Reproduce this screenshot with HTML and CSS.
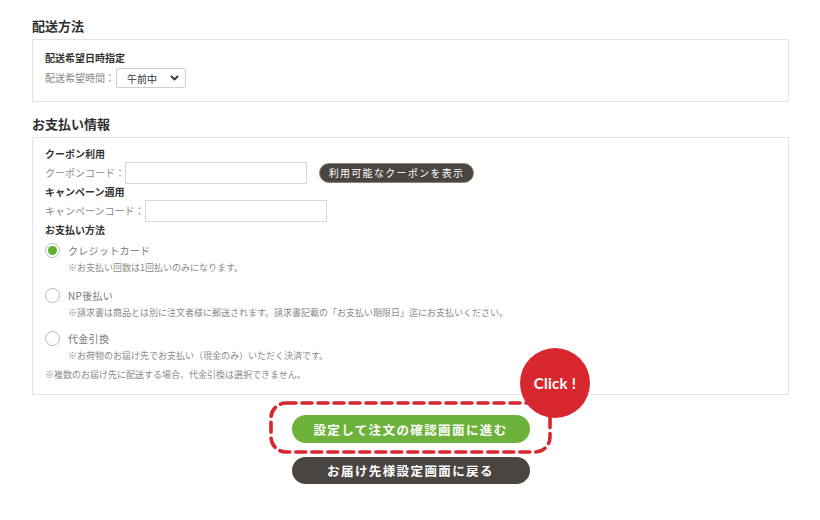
FILE: index.html
```html
<!DOCTYPE html>
<html lang="ja">
<head>
<meta charset="utf-8">
<link rel="stylesheet" href="styles.css">
</head>
<body>
<div class="page">
  <h2 class="sec-title">配送方法</h2>
  <div class="box box-ship">
    <div class="sub">配送希望日時指定</div>
    <div class="row">
      <span class="lbl">配送希望時間：</span>
      <div class="select"><span>午前中</span>
        <svg width="9" height="6" viewBox="0 0 9 6"><path d="M1 1l3.5 3.5L8 1" fill="none" stroke="#333" stroke-width="1.8"/></svg>
      </div>
    </div>
  </div>

  <h2 class="sec-title">お支払い情報</h2>
  <div class="box box-pay">
    <div class="sub">クーポン利用</div>
    <div class="row">
      <span class="lbl">クーポンコード：</span>
      <input class="txt" type="text">
      <button class="pill">利用可能なクーポンを表示</button>
    </div>
    <div class="sub">キャンペーン適用</div>
    <div class="row">
      <span class="lbl">キャンペーンコード：</span>
      <input class="txt" type="text">
    </div>
    <div class="sub">お支払い方法</div>

    <div class="opt opt-first">
      <div class="opt-row"><span class="radio on"></span><span class="opt-lbl">クレジットカード</span></div>
      <div class="note">※お支払い回数は1回払いのみになります。</div>
    </div>
    <div class="opt">
      <div class="opt-row"><span class="radio"></span><span class="opt-lbl">NP後払い</span></div>
      <div class="note">※請求書は商品とは別に注文者様に郵送されます。請求書記載の「お支払い期限日」迄にお支払いください。</div>
    </div>
    <div class="opt opt-last">
      <div class="opt-row"><span class="radio"></span><span class="opt-lbl">代金引換</span></div>
      <div class="note">※お荷物のお届け先でお支払い（現金のみ）いただく決済です。</div>
    </div>
    <div class="note note-final">※複数のお届け先に配送する場合、代金引換は選択できません。</div>
  </div>

  <div class="actions">
    <div class="focus">
      <svg class="dash" width="283" height="53" viewBox="0 0 283 53"><rect x="2" y="2" width="279" height="49" rx="15" fill="none" stroke="#d8262e" stroke-width="3.6" stroke-dasharray="10 6" stroke-linecap="round"/></svg>
      <button class="btn btn-green">設定して注文の確認画面に進む</button>
      <div class="click">Click !</div>
    </div>
    <button class="btn btn-dark">お届け先様設定画面に戻る</button>
  </div>
</div>
</body>
</html>
```

FILE: styles.css
```css
* { box-sizing: border-box; }
html, body { margin: 0; padding: 0; background: #fff; }
body {
  font-family: "Noto Sans CJK JP", "Noto Sans", sans-serif;
  color: #333;
}
.page {
  width: 820px;
  padding: 16px 31px 0 32px;
}
.sec-title {
  margin: 0 0 3px 0;
  font-size: 13px;
  line-height: 20px;
  font-weight: 700;
  color: #2e2e2e;
}
.box {
  border: 1px solid #e4e4e4;
  padding: 0 12px;
}
.box-ship {
  height: 63px;
  padding-top: 10px;
  margin-bottom: 12px;
}
.box-pay {
  padding-top: 8px;
  padding-bottom: 12px;
}
.sub {
  font-size: 10px;
  line-height: 15px;
  font-weight: 700;
  color: #333;
}
.box-ship .sub { line-height: 16px; }
.row {
  display: flex;
  align-items: center;
  margin-top: 1px;
}
.box-ship .row { margin-top: 2px; }
.lbl {
  font-size: 10px;
  line-height: 14px;
  color: #8a8a8a;
  letter-spacing: 0;
}
.select {
  margin-left: 1px;
  width: 70px;
  height: 20px;
  border: 1px solid #cfcfcf;
  border-radius: 2px;
  display: flex;
  align-items: center;
  justify-content: space-between;
  padding: 0 6px 0 10px;
  font-size: 10px;
  color: #333;
  background: #fff;
}
.txt {
  width: 182px;
  height: 22px;
  border: 1px solid #d9d9d9;
  border-radius: 0;
  margin: 0;
  padding: 0;
  background: #fff;
}
.pill {
  margin-left: 12px;
  width: 155px;
  height: 20px;
  border: 1px solid #8b8580;
  border-radius: 10px;
  background: #4b4541;
  color: #fff;
  font-family: inherit;
  font-size: 10px;
  letter-spacing: 1.3px;
  padding: 0;
  line-height: 18px;
}
.opt { margin-top: 12px; }
.opt-first { margin-top: 5px; }
.opt-last { margin-top: 10px; }
.opt-row {
  display: flex;
  align-items: center;
  height: 16px;
}
.radio {
  width: 15px;
  height: 15px;
  border: 1px solid #b9b9b9;
  border-radius: 50%;
  background: #fff;
  display: flex;
  align-items: center;
  justify-content: center;
  flex: none;
}
.radio.on::after {
  content: "";
  width: 9px;
  height: 9px;
  border-radius: 50%;
  background: #5fae2e;
}
.opt-lbl {
  margin-left: 8px;
  font-size: 10px;
  color: #777;
  letter-spacing: 0.3px;
}
.note {
  margin: 3px 0 0 23px;
  font-size: 9px;
  line-height: 14px;
  color: #8a8a8a;
}
.note-final {
  margin: 5px 0 0 0;
}
.actions {
  display: flex;
  flex-direction: column;
  align-items: center;
  margin-top: 6px;
}
.focus {
  position: relative;
  width: 283px;
  height: 53px;
  padding-top: 14px;
  display: flex;
  justify-content: center;
  align-items: flex-start;
}
.dash {
  position: absolute;
  left: 0;
  top: 0;
}
.btn {
  width: 238px;
  border: none;
  padding: 0;
  color: #fff;
  font-family: inherit;
  font-weight: 700;
  font-size: 12.5px;
  letter-spacing: 1.4px;
  cursor: pointer;
}
.btn-green {
  height: 28px;
  border-radius: 14px;
  background: #6cb23b;
  position: relative;
  z-index: 1;
}
.btn-dark {
  height: 27px;
  border-radius: 14px;
  background: #4a4541;
  margin-top: 3px;
}
.click {
  position: absolute;
  left: 251px;
  top: -53px;
  width: 70px;
  height: 70px;
  border-radius: 50%;
  background: #d8282f;
  color: #fff;
  font-family: Lato, "Noto Sans", sans-serif;
  font-weight: 700;
  font-size: 15px;
  display: flex;
  align-items: center;
  justify-content: center;
  letter-spacing: 0.3px;
  z-index: 2;
}
```
